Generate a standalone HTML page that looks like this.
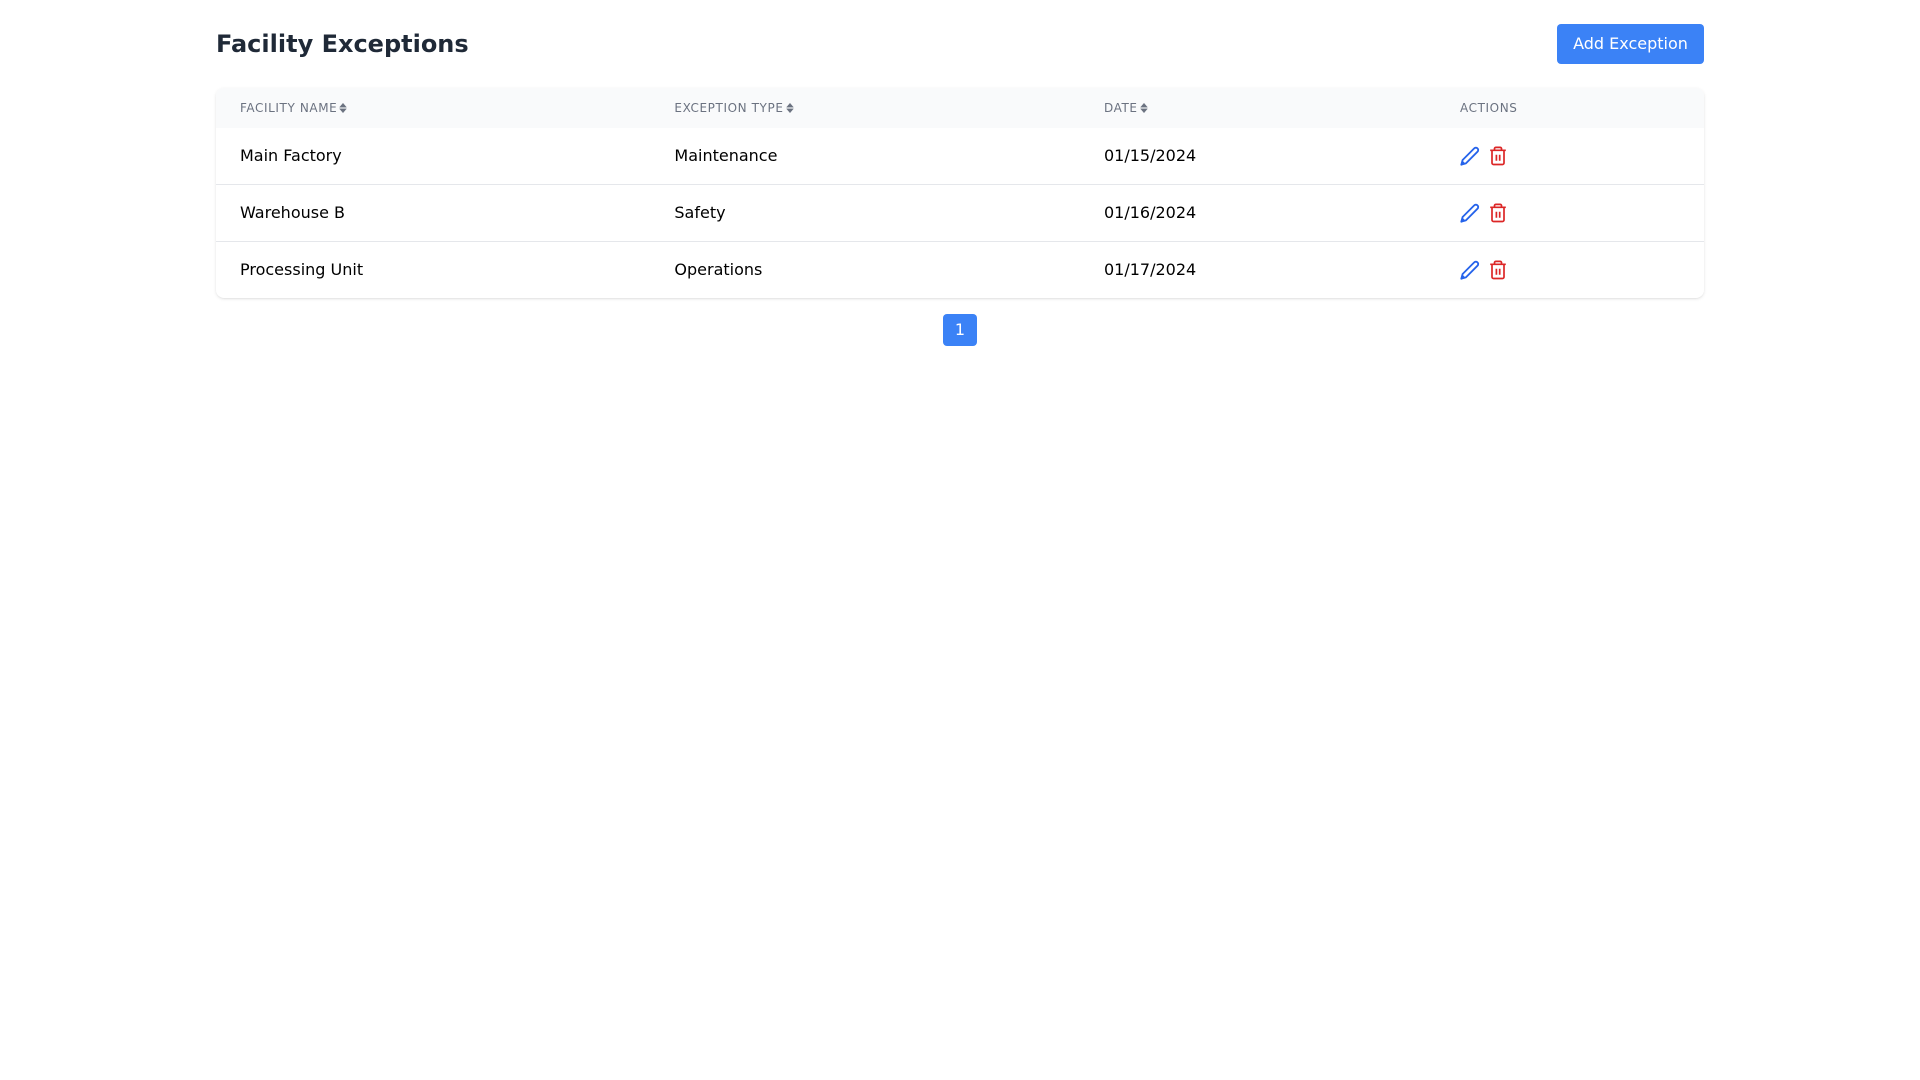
<!DOCTYPE html>
<html lang="en"><head><meta charset="utf-8"><title>Facility Exceptions</title>
<style>
*{box-sizing:border-box;margin:0;padding:0}
html,body{width:1920px;height:1080px;background:#fff;overflow:hidden;font-family:ui-sans-serif,system-ui,"DejaVu Sans",sans-serif;color:#000}
.page{position:absolute;left:0;top:0;width:1920px;height:1080px;will-change:transform}
h1{position:absolute;left:216px;top:26px;font-size:24px;line-height:36px;font-weight:700;color:#1f2937}
.add{position:absolute;left:1557px;top:24px;width:147px;height:40px;background:#3b82f6;border-radius:4px;color:#fff;font-size:16px;line-height:40px;text-align:center}
.tbl{position:absolute;left:216px;top:88px;width:1488px;height:210px;background:#fff;border-radius:8px;box-shadow:0 1px 3px 0 rgba(0,0,0,.1),0 1px 2px -1px rgba(0,0,0,.1);overflow:hidden}
.hd{position:absolute;left:0;top:0;width:1488px;height:40px;background:#f9fafb}
.th{position:absolute;top:0;line-height:40px;font-size:12px;letter-spacing:.6px;color:#6b7280;white-space:nowrap;display:flex;align-items:center;height:40px}
.th svg{margin-left:2px}
.row{position:absolute;left:0;width:1488px;height:57px;border-bottom:1px solid #e5e7eb}
.row:last-child{border-bottom:0}
.td{position:absolute;top:0;line-height:56px;font-size:16px;white-space:nowrap}
.c1{left:24px}.c2{left:458.4px}.c3{left:888px}.c4{left:1244px}
.ic{position:absolute;top:18px}
.pg{position:absolute;left:943px;top:314px;width:34px;height:32px;background:#3b82f6;border-radius:4px;color:#fff;font-size:16px;line-height:32px;text-align:center}
</style></head><body>
<div class="page">
<h1>Facility Exceptions</h1>
<div class="add">Add Exception</div>
<div class="tbl">
<div class="hd">
<div class="th c1">FACILITY NAME<svg width="8" height="12" viewBox="0 0 8 12"><path d="M4 1.200 7.400 5.200H.6zM4 10.800.6 6.800h6.800z" fill="#6b7280" stroke="#6b7280" stroke-width=".4" stroke-linejoin="round"/></svg></div>
<div class="th c2">EXCEPTION TYPE<svg width="8" height="12" viewBox="0 0 8 12"><path d="M4 1.200 7.400 5.200H.6zM4 10.800.6 6.800h6.800z" fill="#6b7280" stroke="#6b7280" stroke-width=".4" stroke-linejoin="round"/></svg></div>
<div class="th c3">DATE<svg width="8" height="12" viewBox="0 0 8 12"><path d="M4 1.200 7.400 5.200H.6zM4 10.800.6 6.800h6.800z" fill="#6b7280" stroke="#6b7280" stroke-width=".4" stroke-linejoin="round"/></svg></div>
<div class="th c4">ACTIONS</div>
</div>
<div class="row" style="top:40px">
<div class="td c1">Main Factory</div><div class="td c2">Maintenance</div><div class="td c3">01/15/2024</div>
<svg class="ic" style="left:1244px" width="20" height="20" viewBox="0 0 20 20"><path d="M1.300 18.700 2.600 14 14.200 2.400a2.300 2.300 0 0 1 3.300 0 2.300 2.300 0 0 1 0 3.300L5.900 17.400z" fill="none" stroke="#2563eb" stroke-width="1.800" stroke-linejoin="round"/><path d="M1 19l1.200-4.600 3.400 3.400z" fill="#2563eb"/></svg>
<svg class="ic" style="left:1274px" width="16" height="20" viewBox="0 0 16 20"><path d="M.2 4.300h15.600M2 4.300v12.700A1.500 1.500 0 0 0 3.500 18.500h9a1.500 1.500 0 0 0 1.500-1.500V4.300M4.500 4.300V2.400A1.600 1.600 0 0 1 6.100 1.400h3.800a1.600 1.600 0 0 1 1.600 1V4.300M6.400 8.700v6M9.700 8.700v6" fill="none" stroke="#dc2626" stroke-width="1.700"/></svg>
</div>
<div class="row" style="top:97px">
<div class="td c1">Warehouse B</div><div class="td c2">Safety</div><div class="td c3">01/16/2024</div>
<svg class="ic" style="left:1244px" width="20" height="20" viewBox="0 0 20 20"><path d="M1.300 18.700 2.600 14 14.200 2.400a2.300 2.300 0 0 1 3.300 0 2.300 2.300 0 0 1 0 3.300L5.900 17.400z" fill="none" stroke="#2563eb" stroke-width="1.800" stroke-linejoin="round"/><path d="M1 19l1.200-4.600 3.400 3.400z" fill="#2563eb"/></svg>
<svg class="ic" style="left:1274px" width="16" height="20" viewBox="0 0 16 20"><path d="M.2 4.300h15.600M2 4.300v12.700A1.500 1.500 0 0 0 3.500 18.500h9a1.500 1.500 0 0 0 1.500-1.500V4.300M4.500 4.300V2.400A1.600 1.600 0 0 1 6.100 1.400h3.800a1.600 1.600 0 0 1 1.600 1V4.300M6.400 8.700v6M9.700 8.700v6" fill="none" stroke="#dc2626" stroke-width="1.700"/></svg>
</div>
<div class="row" style="top:154px">
<div class="td c1">Processing Unit</div><div class="td c2">Operations</div><div class="td c3">01/17/2024</div>
<svg class="ic" style="left:1244px" width="20" height="20" viewBox="0 0 20 20"><path d="M1.300 18.700 2.600 14 14.200 2.400a2.300 2.300 0 0 1 3.300 0 2.300 2.300 0 0 1 0 3.300L5.900 17.400z" fill="none" stroke="#2563eb" stroke-width="1.800" stroke-linejoin="round"/><path d="M1 19l1.200-4.600 3.400 3.400z" fill="#2563eb"/></svg>
<svg class="ic" style="left:1274px" width="16" height="20" viewBox="0 0 16 20"><path d="M.2 4.300h15.600M2 4.300v12.700A1.500 1.500 0 0 0 3.500 18.500h9a1.500 1.500 0 0 0 1.500-1.500V4.300M4.500 4.300V2.400A1.600 1.600 0 0 1 6.100 1.400h3.800a1.600 1.600 0 0 1 1.600 1V4.300M6.400 8.700v6M9.700 8.700v6" fill="none" stroke="#dc2626" stroke-width="1.700"/></svg>
</div>
</div>
<div class="pg">1</div>
</div>
</body></html>
